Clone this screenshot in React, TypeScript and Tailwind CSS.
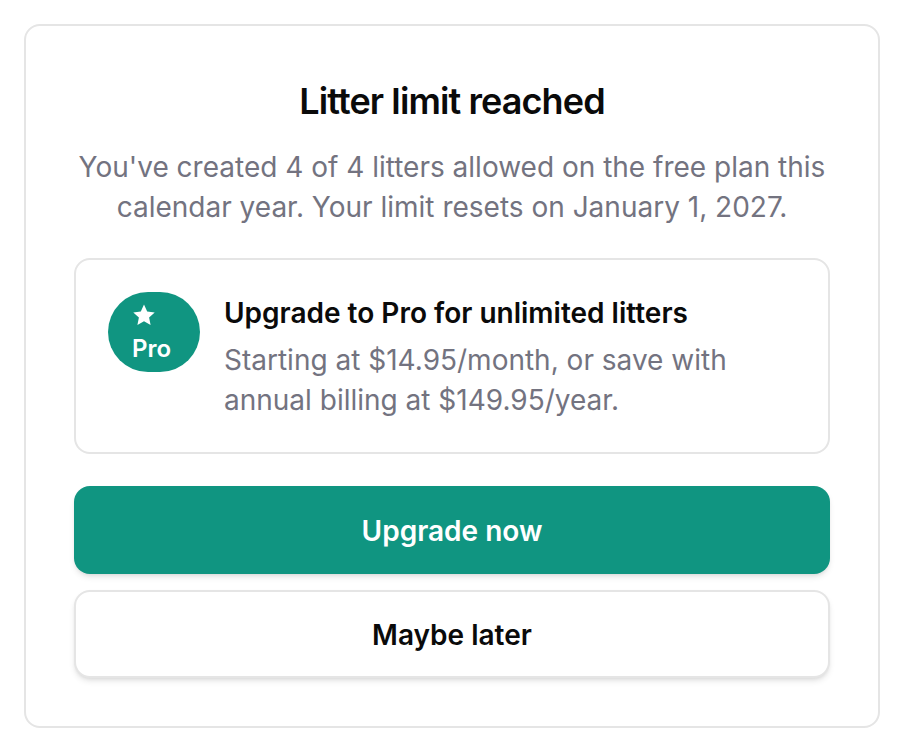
import React from 'react';

const StarIcon = () => (
  <svg viewBox="0 0 24 24" className="h-[24px] w-[24px]" fill="#ffffff">
    <path d="M12 1.6l3.2 6.9 7.5.9-5.6 5.1 1.5 7.4L12 18.2l-6.6 3.7 1.5-7.4-5.6-5.1 7.5-.9z" />
  </svg>
);

export default function App() {
  return (
    <div className="min-h-screen bg-white p-6 font-['Inter',sans-serif]">
      <div className="h-[704px] rounded-2xl border-2 border-[#e5e5e5] bg-white p-12">
        <h1 className="text-center text-[36px] leading-[54px] font-semibold tracking-[-0.9px] text-[#0a0a0a]">Litter limit reached</h1>
        <p className="mt-[19px] text-center text-[28px] leading-[40px] text-[#737380]">
          You've created 4 of 4 litters allowed on the free plan this calendar year. Your limit resets on January 1, 2027.
        </p>

        <div className="mt-[31px] flex h-[196px] items-start gap-6 rounded-2xl border-2 border-[#e5e5e5] p-8">
          <div className="flex h-[80px] w-[92px] shrink-0 flex-col items-start rounded-full bg-[#109581] pt-[11px] pl-6 text-white">
            <StarIcon />
            <span className="mt-[4px] text-[24px] leading-[36px] font-semibold">Pro</span>
          </div>
          <div className="min-w-0">
            <div className="text-[28px] leading-[42px] font-semibold text-[#0a0a0a]">Upgrade to Pro for unlimited litters</div>
            <div className="mt-[6px] text-[28px] leading-[40px] text-[#737380]">
              Starting at $14.95/month, or save with annual billing at $149.95/year.
            </div>
          </div>
        </div>

        <button className="mt-8 block h-[88px] w-full rounded-2xl bg-[#109581] pt-[1px] text-[28px] font-semibold text-white shadow-md">Upgrade now</button>
        <button className="mt-4 block h-[88px] w-full rounded-2xl border-2 border-[#e5e5e5] bg-white pt-[1px] text-[28px] font-semibold text-[#0a0a0a] shadow-md">Maybe later</button>
      </div>
    </div>
  );
}
